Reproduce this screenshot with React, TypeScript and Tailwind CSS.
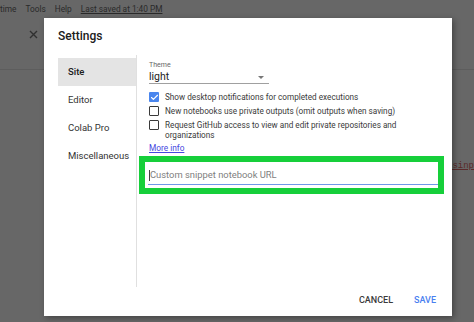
import { Check } from "lucide-react";

function MenuBar() {
  return (
    <div className="flex h-[18px] items-center gap-[9px] pl-0 text-[8.3px] text-[#2a2a2a]">
      <span>time</span>
      <span>Tools</span>
      <span>Help</span>
      <span className="underline">Last saved at 1:40 PM</span>
    </div>
  );
}

function Backdrop() {
  return (
    <div className="flex h-full flex-col">
      <MenuBar />
      <div className="flex h-[52px] items-start border-b border-[#5d5d5d] pl-[29px] pt-[11px] text-[#303030]">
        <svg width="9" height="9" viewBox="0 0 9 9" className="mt-[1px]">
          <path d="M1 1 L8 8 M8 1 L1 8" stroke="currentColor" strokeWidth="1.4" />
        </svg>
      </div>
      <div className="flex justify-end pt-[90px] pr-0">
        <span className="font-['Liberation_Mono',monospace] text-[9px] text-[#5a2a2a] underline">usinp</span>
      </div>
    </div>
  );
}

function NavItem({ label, active }: { label: string; active?: boolean }) {
  return (
    <div
      className={
        active
          ? "flex h-[28px] items-center bg-[#e4e4e4] pl-[10px] text-[9.5px] font-medium text-[#202020]"
          : "flex h-[28px] items-center pl-[10px] text-[9.5px] text-[#333]"
      }
    >
      {label}
    </div>
  );
}

function CheckRow({ checked, children }: { checked?: boolean; children: React.ReactNode }) {
  return (
    <div className="flex items-start gap-[6px]">
      {checked ? (
        <div className="flex size-[10px] shrink-0 items-center justify-center rounded-[1px] bg-[#4a86ee]">
          <Check size={9} strokeWidth={3} color="white" />
        </div>
      ) : (
        <div className="size-[10px] shrink-0 rounded-[1px] border-[1.5px] border-[#3a3a3a]" />
      )}
      <span className="text-[8.2px] leading-[10px] text-[#3a3a3a]">{children}</span>
    </div>
  );
}

function Dialog() {
  return (
    <div className="absolute left-[44px] top-[18px] flex h-[298px] w-[408px] flex-col bg-white shadow-[2px_2px_6px_rgba(0,0,0,0.35)]">
      <div className="h-[37px] pl-[14px] pt-[10px] text-[12px] font-medium leading-[16px] text-[#202020]">Settings</div>
      <div className="flex h-[232px]">
        <div className="ml-[14px] w-[79px] border-r border-[#e0e0e0] pt-[3px]">
          <NavItem label="Site" active />
          <NavItem label="Editor" />
          <NavItem label="Colab Pro" />
          <NavItem label="Miscellaneous" />
        </div>
        <div className="flex flex-1 flex-col pl-[2px] pr-[8px]">
          <div className="pl-[10px] pt-[6px]">
            <div className="text-[7px] leading-[8px] text-[#666]">Theme</div>
            <div className="mt-[1px] flex h-[14px] w-[120px] items-center justify-between border-b border-[#a0a0a0] pr-[5px] text-[10.5px] text-[#222]">
              <span>light</span>
              <span className="mt-[2px] border-x-[3px] border-t-[3px] border-x-transparent border-t-[#777]" />
            </div>
            <div className="mt-[8px] flex flex-col gap-[4px]">
              <CheckRow checked>Show desktop notifications for completed executions</CheckRow>
              <CheckRow>New notebooks use private outputs (omit outputs when saving)</CheckRow>
              <CheckRow>
                Request GitHub access to view and edit private repositories and
                <br />
                organizations
              </CheckRow>
            </div>
            <div className="mt-[3px] text-[8.3px] leading-[10px] text-[#4646e0] underline">More info</div>
          </div>
          <div className="mt-[3px] h-[38px] border-[6px] border-[#16cf3a] pl-[3px] pr-0">
            <div className="mt-[5px] flex h-[18px] items-center border-b border-[#6f98e8] pl-[1px] text-[9.4px] text-[#808080]">
              <span className="h-[11px] w-px bg-[#444]" />
              Custom snippet notebook URL
            </div>
          </div>
        </div>
      </div>
      <div className="flex flex-1 items-center justify-end gap-[21px] pr-[16px] pb-[2px] text-[9px] font-medium">
        <span className="text-[#3a3a3a]">CANCEL</span>
        <span className="text-[#4a80f0]">SAVE</span>
      </div>
    </div>
  );
}

export default function App() {
  return (
    <div className="relative h-[322px] w-[474px] overflow-hidden bg-[#676767] font-['Roboto',sans-serif]">
      <Backdrop />
      <Dialog />
    </div>
  );
}
